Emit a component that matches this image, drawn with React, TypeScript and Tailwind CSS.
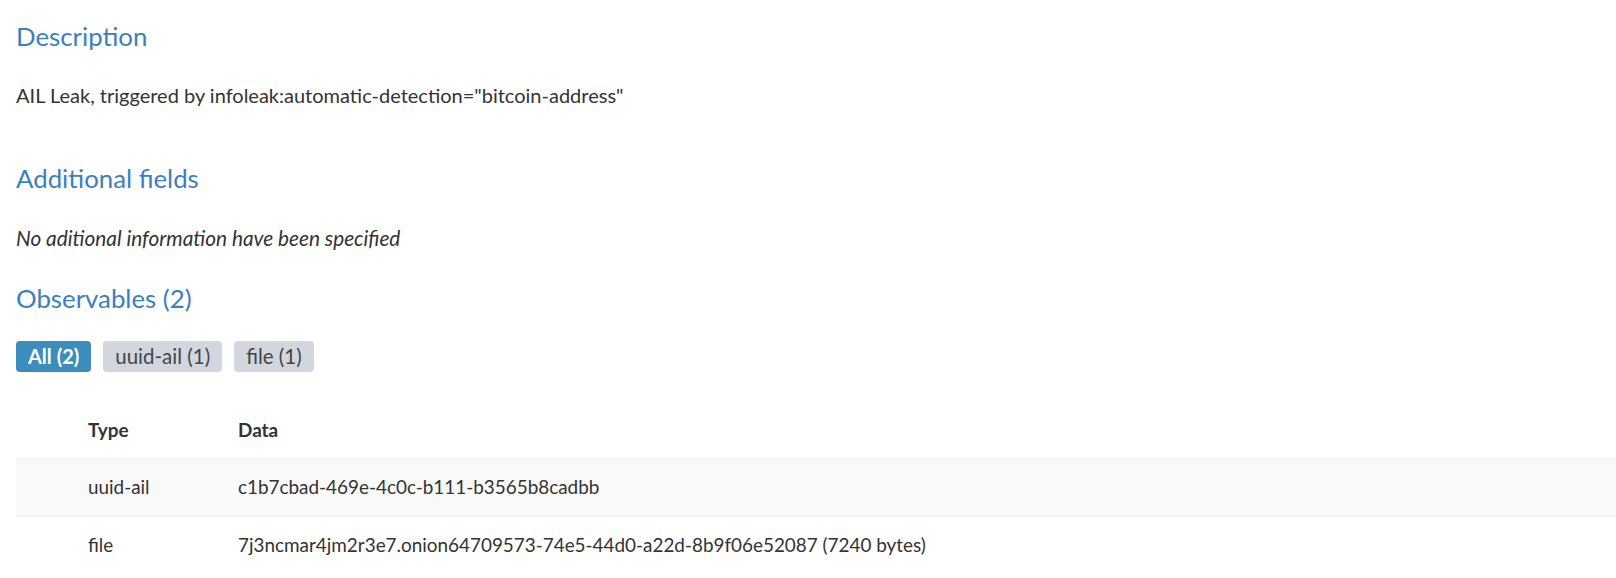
import React from "react";

const rows = [
  { type: "uuid-ail", data: "c1b7cbad-469e-4c0c-b111-b3565b8cadbb" },
  { type: "file", data: "7j3ncmar4jm2r3e7.onion64709573-74e5-44d0-a22d-8b9f06e52087 (7240 bytes)" },
];

export default function App() {
  return (
    <div className="min-h-screen bg-white pl-4 text-[#333] font-['Lato',sans-serif]">
      <h3 className="pt-[21px] text-[25.8px] leading-[30px] text-[#3a80c0]">Description</h3>
      <p className="mt-[32px] text-[20px] leading-[24px]">
        AIL Leak, triggered by infoleak:automatic-detection="bitcoin-address"
      </p>

      <h3 className="mt-[56px] text-[25.8px] leading-[30px] text-[#3a80c0]">Additional fields</h3>
      <p className="mt-[33px] text-[20.8px] leading-[24px] italic">No aditional information have been specified</p>

      <h3 className="mt-[33px] text-[25.8px] leading-[30px] text-[#3a80c0]">Observables (2)</h3>

      <div className="mt-[28px] flex gap-[12px]">
        <span className="h-[31px] rounded-[4px] bg-[#3c8dbc] px-[12px] text-[20px] leading-[31px] font-bold text-white">All (2)</span>
        <span className="h-[31px] rounded-[4px] bg-[#d2d6de] px-[12px] text-[20.5px] leading-[31px] text-[#444]">uuid-ail (1)</span>
        <span className="h-[31px] rounded-[4px] bg-[#d2d6de] px-[12px] text-[20.5px] leading-[31px] text-[#444]">file (1)</span>
      </div>

      <table className="mt-[31px] w-full border-collapse text-[18.9px]">
        <thead>
          <tr className="h-[56px] text-left">
            <th className="w-[72px]"></th>
            <th className="w-[150px] font-bold">Type</th>
            <th className="font-bold">Data</th>
          </tr>
        </thead>
        <tbody>
          {rows.map((r, i) => (
            <tr key={r.type} className={`h-[57px] border-t-2 border-[#f4f4f4] ${i % 2 === 0 ? "bg-[#f9f9f9]" : ""}`}>
              <td></td>
              <td>{r.type}</td>
              <td>{r.data}</td>
            </tr>
          ))}
        </tbody>
      </table>
    </div>
  );
}
